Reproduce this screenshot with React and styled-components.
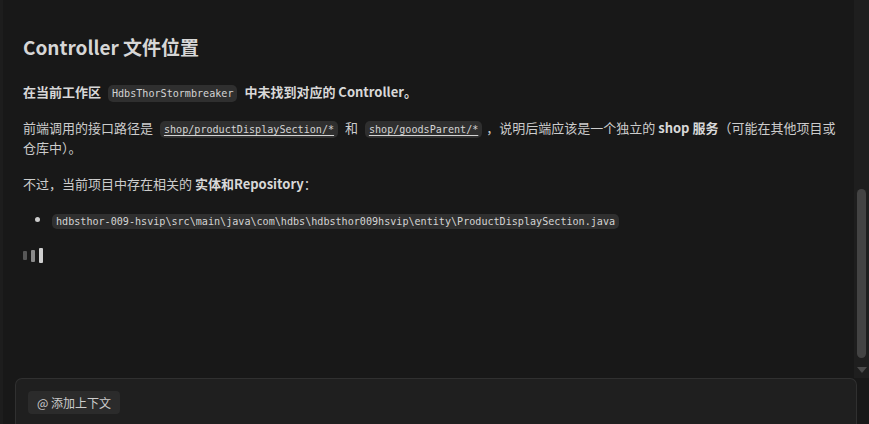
import styled, { createGlobalStyle } from 'styled-components';

const GlobalStyle = createGlobalStyle`
  html, body {
    margin: 0;
    padding: 0;
    background: #181818;
  }

  * {
    box-sizing: border-box;
  }
`;

const Shell = styled.div`
  display: flex;
  flex-direction: column;
  height: 100vh;
  border-left: 3px solid #1d1d1d;
  background: #181818;
  color: #cccccc;
  font-family: "Noto Sans CJK SC", "Noto Sans", sans-serif;
  font-size: 13px;
  overflow: hidden;
`;

const Main = styled.div`
  display: flex;
  flex: 1;
  min-height: 0;
`;

const Content = styled.div`
  flex: 1;
  min-width: 0;
  padding: 34px 14px 0 20px;
`;

const Heading = styled.h2`
  margin: 0 0 22px;
  font-size: 19px;
  line-height: 26px;
  font-weight: 600;
  color: #d6d6d6;
`;

const Paragraph = styled.p`
  margin: 0 0 16px;
  line-height: 20px;
`;

const Strong = styled.strong`
  font-weight: 700;
  color: #d8d8d8;
`;

const Code = styled.code`
  margin: 0 4px;
  padding: 3px 4px;
  border-radius: 5px;
  background: #2f2f2f;
  color: #d4d4d4;
  font-family: "DejaVu Sans Mono", "Liberation Mono", monospace;
  font-size: 10.1px;
  line-height: 12px;
  text-decoration: ${({ $link }) => ($link ? 'underline' : 'none')};
  text-underline-offset: 2px;
`;

const List = styled.ul`
  margin: 15px 0 0;
  padding-left: 29px;
  list-style: disc;
`;

const Item = styled.li`
  line-height: 20px;

  & > code {
    margin: 0;
    padding: 2px 4px;
  }
`;

const Loader = styled.div`
  display: flex;
  align-items: center;
  gap: 4px;
  height: 15px;
  margin-top: 18px;
`;

const Bar = styled.span`
  width: 4px;
  height: ${({ $h }) => $h}px;
  border-radius: 1px;
  background: ${({ $c }) => $c};
`;

const Track = styled.div`
  display: flex;
  flex-direction: column;
  align-items: center;
  width: 15px;
  background: #1e1e1e;
`;

const Thumb = styled.div`
  width: 9px;
  height: 169px;
  margin-top: 189px;
  border-radius: 5px;
  background: #434343;
`;

const Arrow = styled.div`
  margin-top: 9px;
  width: 0;
  height: 0;
  border-left: 5px solid transparent;
  border-right: 5px solid transparent;
  border-top: 6px solid #4b4b4b;
`;

const Composer = styled.div`
  height: 46px;
  padding: 0 12px 0 12px;
`;

const InputBox = styled.div`
  height: 100%;
  padding: 12px;
  border: 1px solid #303030;
  border-bottom: none;
  border-radius: 7px 7px 0 0;
  background: #1f1f1f;
`;

const ContextButton = styled.button`
  display: inline-flex;
  align-items: center;
  gap: 3px;
  height: 23px;
  padding: 0 9px;
  border: none;
  border-radius: 4px;
  background: #2b2b2b;
  color: #cccccc;
  font-family: "Noto Sans CJK SC", "Noto Sans", sans-serif;
  font-size: 12px;
  cursor: pointer;
`;

function App() {
  return (
    <>
      <GlobalStyle />
      <Shell>
        <Main>
          <Content>
            <Heading>Controller 文件位置</Heading>
            <Paragraph>
              <Strong>在当前工作区</Strong> <Code>HdbsThorStormbreaker</Code> <Strong>中未找到对应的 Controller。</Strong>
            </Paragraph>
            <Paragraph>
              前端调用的接口路径是 <Code $link>shop/productDisplaySection/*</Code> 和 <Code $link>shop/goodsParent/*</Code>，说明后端应该是一个独立的 <Strong>shop 服务</Strong>（可能在其他项目或仓库中）。
            </Paragraph>
            <Paragraph>
              不过，当前项目中存在相关的 <Strong>实体和Repository</Strong>：
            </Paragraph>
            <List>
              <Item>
                <Code>hdbsthor-009-hsvip\src\main\java\com\hdbs\hdbsthor009hsvip\entity\ProductDisplaySection.java</Code>
              </Item>
            </List>
            <Loader>
              <Bar $h={9} $c="#575757" />
              <Bar $h={12} $c="#8a8a8a" />
              <Bar $h={15} $c="#cfcfcf" />
            </Loader>
          </Content>
          <Track>
            <Thumb />
            <Arrow />
          </Track>
        </Main>
        <Composer>
          <InputBox>
            <ContextButton>@ 添加上下文</ContextButton>
          </InputBox>
        </Composer>
      </Shell>
    </>
  );
}

export default App;
